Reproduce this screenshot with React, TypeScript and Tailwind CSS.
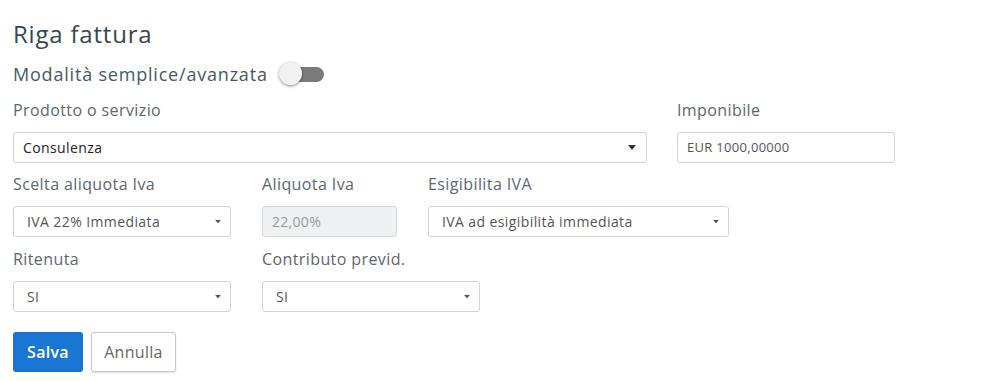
import React from "react";

const Caret = ({ className = "" }: { className?: string }) => (
  <svg width="8" height="5" viewBox="0 0 8 5" className={className}>
    <path d="M0 0h8L4 5z" fill="currentColor" />
  </svg>
);

const Label = ({ children }: { children: React.ReactNode }) => (
  <p className="text-[16px] leading-[22px] tracking-[0.4px] text-[#5c6770] mb-[11px]">{children}</p>
);

const NativeSelect = ({ value, width }: { value: string; width: string }) => (
  <div
    className={`${width} h-[31px] border border-[#cfd4d8] rounded-[3px] bg-white flex items-center justify-between pl-[13px] pr-[8px] text-[14px] tracking-[0.4px] text-[#555]`}
  >
    <span>{value}</span>
    <Caret className="text-[#555] scale-75" />
  </div>
);

export default function App() {
  return (
    <div
      className="w-[981px] h-[381px] bg-white px-[13px] pt-[18px]"
      style={{ fontFamily: '"Open Sans", "DejaVu Sans", sans-serif' }}
    >
      <h1 className="text-[24px] leading-[32px] tracking-[0.8px] text-[#37474f]">Riga fattura</h1>
      <div className="flex items-center gap-[10px] mt-[11px] h-[26px]">
        <span className="text-[18px] tracking-[0.8px] text-[#455a64]">Modalità semplice/avanzata</span>
        <div className="relative w-[46px] h-[24px] flex items-center">
          <div className="ml-[12px] w-[34px] h-[15px] rounded-full bg-[#7b7b7b]" />
          <div className="absolute left-px top-0 w-[23px] h-[23px] rounded-full bg-[#f1f1f1] shadow-[0_1px_3px_rgba(0,0,0,0.45)]" />
        </div>
      </div>

      <div className="flex gap-[30px] mt-[12px]">
        <div>
          <Label>Prodotto o servizio</Label>
          <div className="w-[634px] h-[31px] border border-[#cfd4d8] rounded-[3px] bg-white flex items-center justify-between pl-[9px] pr-[10px] text-[14px] tracking-[0.4px] text-[#222]">
            <span>Consulenza</span>
            <Caret className="text-[#333]" />
          </div>
        </div>
        <div>
          <Label>Imponibile</Label>
          <div className="w-[218px] h-[31px] border border-[#cfd4d8] rounded-[3px] bg-white flex items-center pl-[9px] text-[13px] tracking-[0.3px] text-[#555]">
            EUR 1000,00000
          </div>
        </div>
      </div>

      <div className="flex gap-[31px] mt-[10px]">
        <div>
          <Label>Scelta aliquota Iva</Label>
          <NativeSelect value="IVA 22% Immediata" width="w-[218px]" />
        </div>
        <div>
          <Label>Aliquota Iva</Label>
          <div className="w-[135px] h-[31px] border border-[#d6dadd] rounded-[3px] bg-[#eef0f1] flex items-center pl-[9px] text-[14px] tracking-[0.3px] text-[#999]">
            22,00%
          </div>
        </div>
        <div>
          <Label>Esigibilita IVA</Label>
          <NativeSelect value="IVA ad esigibilità immediata" width="w-[301px]" />
        </div>
      </div>

      <div className="flex gap-[31px] mt-[11px]">
        <div>
          <Label>Ritenuta</Label>
          <NativeSelect value="SI" width="w-[218px]" />
        </div>
        <div>
          <Label>Contributo previd.</Label>
          <NativeSelect value="SI" width="w-[218px]" />
        </div>
      </div>

      <div className="flex gap-[8px] mt-[20px]">
        <button className="w-[70px] h-[40px] rounded-[3px] bg-[#1976d2] text-white text-[16px] tracking-[0.3px] font-semibold">
          Salva
        </button>
        <button className="w-[85px] h-[40px] rounded-[3px] bg-white border border-[#c4c8cb] text-[#666] text-[16px] tracking-[0.3px] shadow-[0_1px_2px_rgba(0,0,0,0.12)]">
          Annulla
        </button>
      </div>
    </div>
  );
}
